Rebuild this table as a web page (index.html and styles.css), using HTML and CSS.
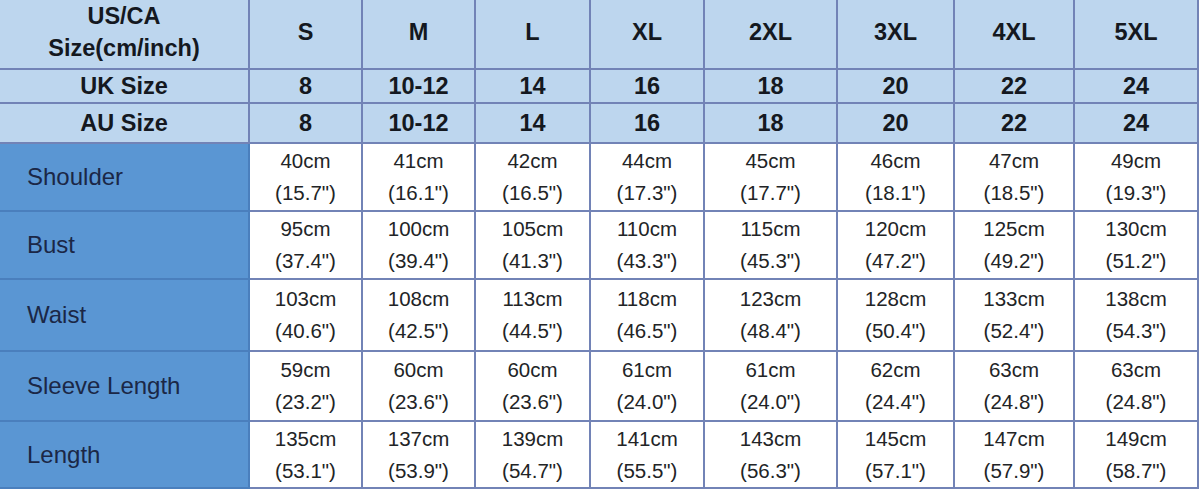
FILE: index.html
```html
<!DOCTYPE html>
<html lang="en">
<head>
<meta charset="utf-8">
<title>Size Chart</title>
<link rel="stylesheet" href="styles.css">
</head>
<body>
<table class="chart">
  <colgroup>
    <col class="c-label">
    <col class="c-s">
    <col class="c-m">
    <col class="c-l">
    <col class="c-xl">
    <col class="c-2xl">
    <col class="c-3xl">
    <col class="c-4xl">
    <col class="c-5xl">
  </colgroup>
  <thead>
    <tr class="r-us">
      <th class="head-label">US/CA<br>Size(cm/inch)</th>
      <th>S</th><th>M</th><th>L</th><th>XL</th><th>2XL</th><th>3XL</th><th>4XL</th><th>5XL</th>
    </tr>
    <tr class="r-uk">
      <th class="head-label">UK Size</th>
      <th>8</th><th>10-12</th><th>14</th><th>16</th><th>18</th><th>20</th><th>22</th><th>24</th>
    </tr>
    <tr class="r-au">
      <th class="head-label">AU Size</th>
      <th>8</th><th>10-12</th><th>14</th><th>16</th><th>18</th><th>20</th><th>22</th><th>24</th>
    </tr>
  </thead>
  <tbody>
    <tr class="r-a">
      <th class="row-label">Shoulder</th>
      <td>40cm<br>(15.7")</td><td>41cm<br>(16.1")</td><td>42cm<br>(16.5")</td><td>44cm<br>(17.3")</td><td>45cm<br>(17.7")</td><td>46cm<br>(18.1")</td><td>47cm<br>(18.5")</td><td>49cm<br>(19.3")</td>
    </tr>
    <tr class="r-b">
      <th class="row-label">Bust</th>
      <td>95cm<br>(37.4")</td><td>100cm<br>(39.4")</td><td>105cm<br>(41.3")</td><td>110cm<br>(43.3")</td><td>115cm<br>(45.3")</td><td>120cm<br>(47.2")</td><td>125cm<br>(49.2")</td><td>130cm<br>(51.2")</td>
    </tr>
    <tr class="r-c">
      <th class="row-label">Waist</th>
      <td>103cm<br>(40.6")</td><td>108cm<br>(42.5")</td><td>113cm<br>(44.5")</td><td>118cm<br>(46.5")</td><td>123cm<br>(48.4")</td><td>128cm<br>(50.4")</td><td>133cm<br>(52.4")</td><td>138cm<br>(54.3")</td>
    </tr>
    <tr class="r-d">
      <th class="row-label">Sleeve Length</th>
      <td>59cm<br>(23.2")</td><td>60cm<br>(23.6")</td><td>60cm<br>(23.6")</td><td>61cm<br>(24.0")</td><td>61cm<br>(24.0")</td><td>62cm<br>(24.4")</td><td>63cm<br>(24.8")</td><td>63cm<br>(24.8")</td>
    </tr>
    <tr class="r-e">
      <th class="row-label">Length</th>
      <td>135cm<br>(53.1")</td><td>137cm<br>(53.9")</td><td>139cm<br>(54.7")</td><td>141cm<br>(55.5")</td><td>143cm<br>(56.3")</td><td>145cm<br>(57.1")</td><td>147cm<br>(57.9")</td><td>149cm<br>(58.7")</td>
    </tr>
  </tbody>
</table>
</body>
</html>
```
FILE: styles.css
```css
html, body {
  margin: 0;
  padding: 0;
  background: #ffffff;
}

.chart {
  border-collapse: collapse;
  table-layout: fixed;
  width: 1198px;
  font-family: "Liberation Sans", Arial, sans-serif;
}

.c-label { width: 249px; }
.c-s { width: 113px; }
.c-m { width: 113px; }
.c-l { width: 115px; }
.c-xl { width: 114px; }
.c-2xl { width: 133px; }
.c-3xl { width: 117px; }
.c-4xl { width: 120px; }
.c-5xl { width: 124px; }

.chart th,
.chart td {
  border: 2px solid #7283b6;
  padding: 0;
  text-align: center;
  vertical-align: middle;
}

.chart tr > :first-child { border-left: none; }
.chart thead tr:first-child > * { border-top: none; }

.chart thead th {
  background: #bdd6ee;
  color: #141820;
  font-weight: bold;
  font-size: 23.5px;
  line-height: 32px;
}

.r-us > th { height: 61px; padding-bottom: 4px; }
.r-uk > th { height: 32px; line-height: 30px; }
.r-au > th { height: 38px; }

.chart .row-label {
  background: #5a96d3;
  border-color: #4a7fbd;
  color: #1b2746;
  font-weight: normal;
  font-size: 24px;
  text-align: left;
  padding-left: 27px;
  line-height: 30px;
}

.chart td {
  background: #ffffff;
  color: #222426;
  font-size: 20.5px;
  line-height: 32px;
}

.r-a > * { height: 66px; }
.r-b > * { height: 66px; }
.r-c > * { height: 70px; }
.r-d > * { height: 68px; }
.r-e > * { height: 65px; }
```
